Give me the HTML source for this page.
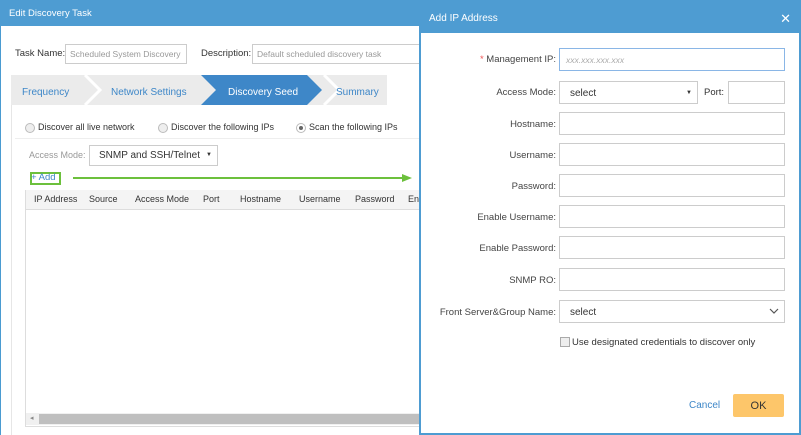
<!DOCTYPE html>
<html><head><style>
body{margin:0;width:801px;height:435px;overflow:hidden;background:#fff;font-family:"Liberation Sans",sans-serif;font-size:9.5px;color:#333;position:relative}
.a{position:absolute;white-space:nowrap}
.inp{position:absolute;border:1px solid #ccc;background:#fff;box-sizing:border-box;white-space:nowrap;overflow:hidden}
.lbl{position:absolute;text-align:right;width:140px;left:416px;font-size:9.5px;color:#444;white-space:nowrap}
</style></head><body>
<div class="a" style="left:0;top:0;width:420px;height:435px;border-left:1px solid #4a9bd1;box-sizing:border-box"></div>
<div class="a" style="left:0;top:0;width:420px;height:26px;background:#4e9cd2;color:#fff;font-size:9.5px;line-height:27px;padding-left:9px;box-sizing:border-box">Edit Discovery Task</div>
<div class="a" style="left:15px;top:48px">Task Name:</div>
<div class="inp" style="left:65px;top:44px;width:122px;height:20px;color:#999;padding:4px 4px;font-size:8.5px">Scheduled System Discovery</div>
<div class="a" style="left:201px;top:48px">Description:</div>
<div class="inp" style="left:252px;top:44px;width:170px;height:20px;color:#999;padding:4px 4px;font-size:8.5px">Default scheduled discovery task</div>
<div class="a" style="left:11px;top:75px;width:376px;height:30px;background:#ebebeb"></div>
<div class="a" style="left:11px;top:105px;width:410px;height:330px;border-left:1px solid #e6e6e6"></div>
<svg class="a" style="left:11px;top:75px" width="380" height="30">
<polyline points="74,0 89,15 74,30" fill="none" stroke="#fff" stroke-width="3"/>
<polygon points="190,0 296,0 311,15 296,30 190,30 205,15" fill="#3e87c8"/>
<polyline points="313,0 328,15 313,30" fill="none" stroke="#fff" stroke-width="3"/>
</svg>
<div class="a" style="left:22px;top:87px;color:#3e87c8;font-size:10px">Frequency</div>
<div class="a" style="left:111px;top:87px;color:#3e87c8;font-size:10px">Network Settings</div>
<div class="a" style="left:228px;top:87px;color:#fff;font-size:10px">Discovery Seed</div>
<div class="a" style="left:336px;top:87px;color:#3e87c8;font-size:10px">Summary</div>
<div class="a" style="left:15px;top:138px;width:405px;border-top:1px solid #eee"></div>
<div class="a" style="left:25px;top:123px;width:8px;height:8px;border:1px solid #bbb;border-radius:50%;background:#eee"></div>
<div class="a" style="left:38px;top:122px;font-size:9px">Discover all live network</div>
<div class="a" style="left:158px;top:123px;width:8px;height:8px;border:1px solid #bbb;border-radius:50%;background:#eee"></div>
<div class="a" style="left:171px;top:122px;font-size:9px">Discover the following IPs</div>
<div class="a" style="left:296px;top:123px;width:8px;height:8px;border:1px solid #bbb;border-radius:50%;background:#fff"></div>
<div class="a" style="left:299px;top:126px;width:4px;height:4px;border-radius:50%;background:#666"></div>
<div class="a" style="left:309px;top:122px;font-size:9px">Scan the following IPs</div>
<div class="a" style="left:29px;top:150px;color:#999;font-size:9px">Access Mode:</div>
<div class="inp" style="left:89px;top:145px;width:129px;height:21px;padding:4px 9px;font-size:10px">SNMP and SSH/Telnet<span style="position:absolute;right:5px;top:6px;font-size:6px">▼</span></div>
<div class="a" style="left:30px;top:172px;width:31px;height:13px;border:2px solid #6cc03c;box-sizing:border-box"></div>
<div class="a" style="left:31px;top:172px;color:#3e87c8;font-size:9.5px">+ Add</div>
<div class="a" style="left:73px;top:177px;width:332px;height:2px;background:#6cc03c"></div>
<svg class="a" style="left:402px;top:174px" width="10" height="8"><polygon points="0,0 10,4 0,8" fill="#6cc03c"/></svg>
<div class="a" style="left:25px;top:190px;width:396px;height:237px;border:1px solid #ddd;box-sizing:border-box"></div>
<div class="a" style="left:26px;top:190px;width:395px;height:20px;background:#f4f4f4;border-bottom:1px solid #ddd;box-sizing:border-box;font-size:9px;line-height:19px;overflow:hidden">
<span class="a" style="left:8px">IP Address</span><span class="a" style="left:63px">Source</span><span class="a" style="left:109px">Access Mode</span><span class="a" style="left:177px">Port</span><span class="a" style="left:214px">Hostname</span><span class="a" style="left:273px">Username</span><span class="a" style="left:329px">Password</span><span class="a" style="left:382px">En</span></div>
<div class="a" style="left:26px;top:413px;width:395px;height:12px;background:#f0f0f0"></div>
<div class="a" style="left:39px;top:414px;width:382px;height:10px;background:#bfbfbf"></div>
<div class="a" style="left:30px;top:414px;font-size:7px;color:#888">◂</div>
<div class="a" style="left:419px;top:0;width:382px;height:435px;border:2px solid #4e9cd2;border-top:none;box-sizing:border-box;background:#fff"></div>
<div class="a" style="left:419px;top:0;width:382px;height:33px;background:#4e9cd2;color:#fff;font-size:10px;line-height:38px;padding-left:10px;box-sizing:border-box">Add IP Address<span style="position:absolute;right:10px;top:0;font-size:13px">✕</span></div>
<div class="lbl" style="top:54px"><span style="color:#e55">*</span> Management IP:</div>
<div class="inp" style="left:559px;top:48px;width:226px;height:23px;border-color:#8ab6e6;padding:6px 6px;color:#aaa;font-style:italic;font-size:8.5px">xxx.xxx.xxx.xxx</div>
<div class="lbl" style="top:87px">Access Mode:</div>
<div class="inp" style="left:559px;top:81px;width:139px;height:23px;padding:6px 10px;font-size:10px">select<span style="position:absolute;right:5px;top:8px;font-size:6px">▼</span></div>
<div class="a" style="left:704px;top:87px">Port:</div>
<div class="inp" style="left:728px;top:81px;width:57px;height:23px"></div>
<div class="lbl" style="top:119px">Hostname:</div><div class="inp" style="left:559px;top:112px;width:226px;height:23px"></div>
<div class="lbl" style="top:150px">Username:</div><div class="inp" style="left:559px;top:143px;width:226px;height:23px"></div>
<div class="lbl" style="top:181px">Password:</div><div class="inp" style="left:559px;top:174px;width:226px;height:23px"></div>
<div class="lbl" style="top:212px">Enable Username:</div><div class="inp" style="left:559px;top:205px;width:226px;height:23px"></div>
<div class="lbl" style="top:243px">Enable Password:</div><div class="inp" style="left:559px;top:236px;width:226px;height:23px"></div>
<div class="lbl" style="top:275px">SNMP RO:</div><div class="inp" style="left:559px;top:268px;width:226px;height:23px"></div>
<div class="lbl" style="top:307px">Front Server&amp;Group Name:</div>
<div class="inp" style="left:559px;top:300px;width:226px;height:23px;padding:6px 10px;font-size:10px">select<svg style="position:absolute;right:5px;top:7px" width="10" height="7"><polyline points="1,1 5,5 9,1" fill="none" stroke="#555" stroke-width="1.2"/></svg></div>
<div class="a" style="left:560px;top:337px;width:8px;height:8px;border:1px solid #aaa;background:#eee"></div>
<div class="a" style="left:572px;top:337px">Use designated credentials to discover only</div>
<div class="a" style="left:689px;top:400px;color:#3e87c8;font-size:10px">Cancel</div>
<div class="a" style="left:733px;top:394px;width:51px;height:23px;background:#fdc66a;border-radius:2px;text-align:center;line-height:24px;font-size:11px">OK</div>
</body></html>
